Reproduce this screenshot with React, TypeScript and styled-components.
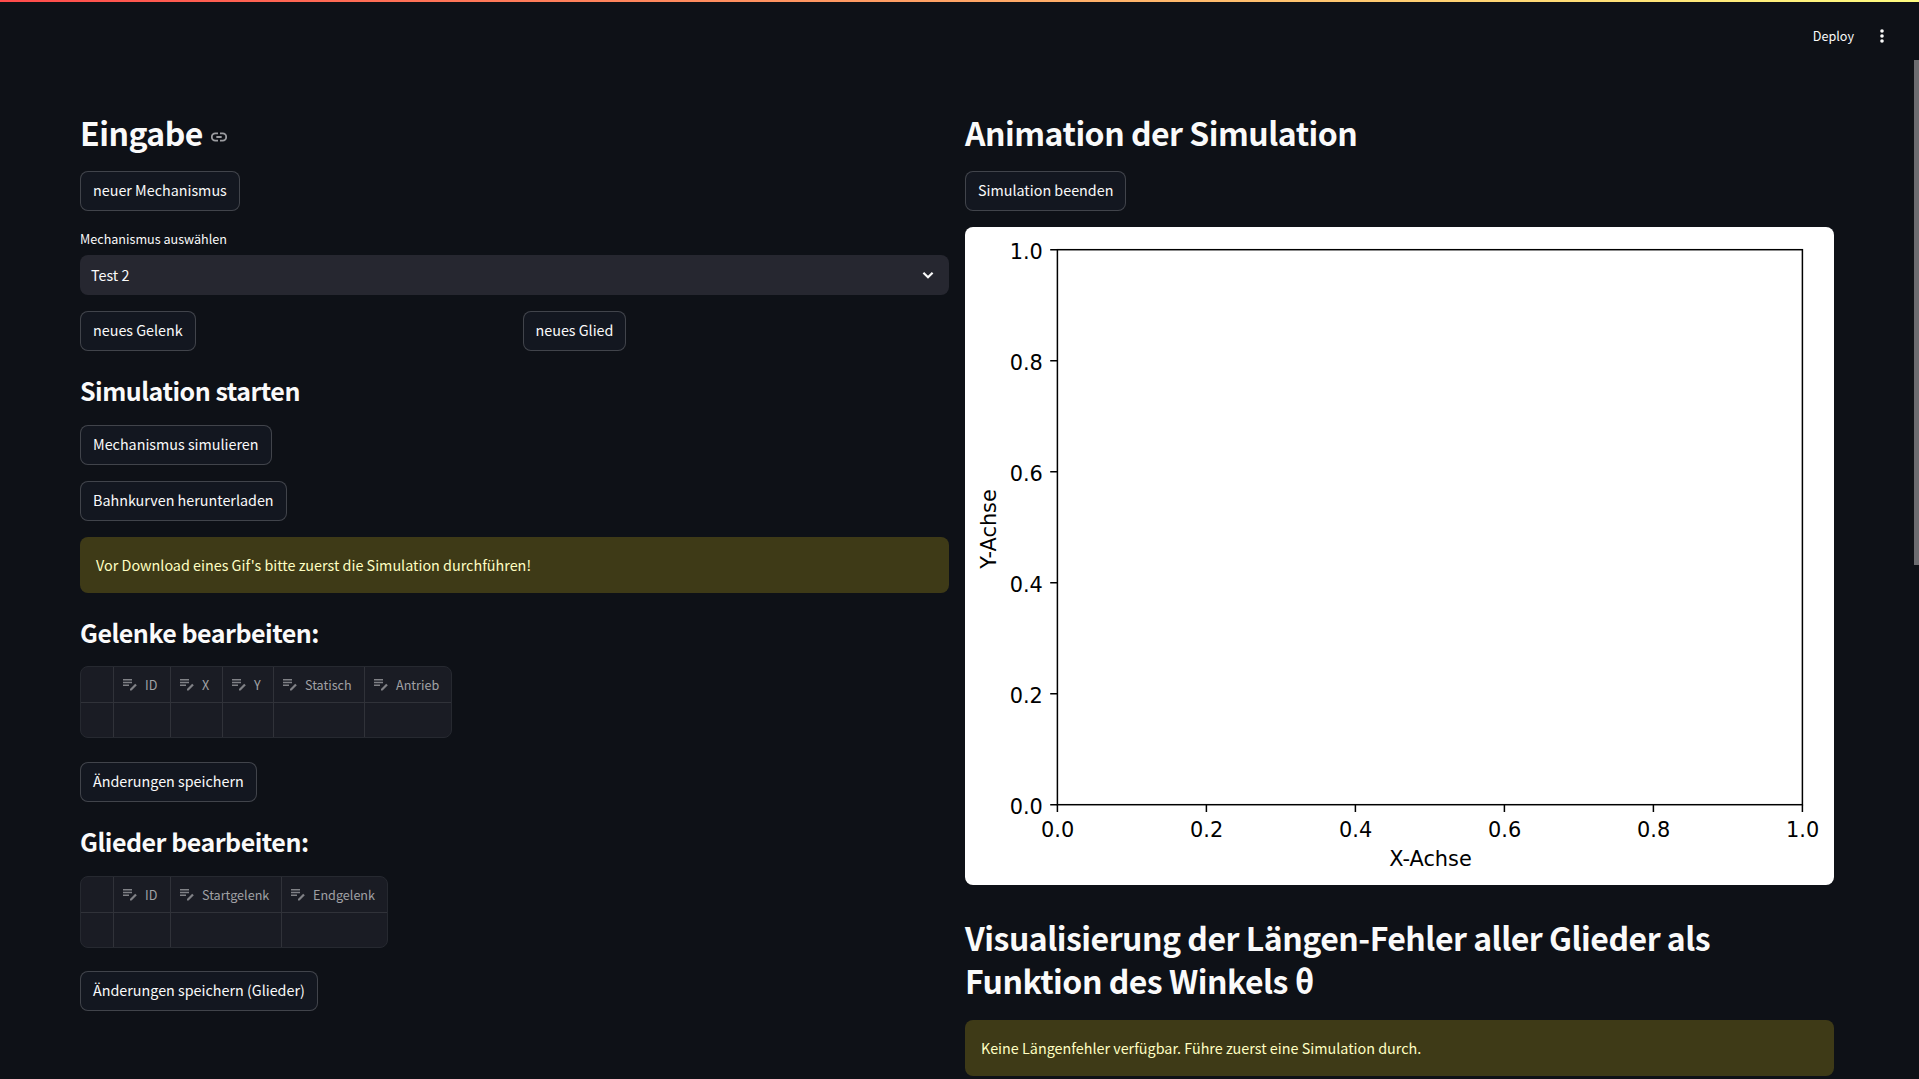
import React from "react";
import styled, { createGlobalStyle } from "styled-components";

const sans = `"Noto Sans CJK SC", "Noto Sans", sans-serif`;

const GlobalStyle = createGlobalStyle`
  * { box-sizing: border-box; }
  html, body { margin: 0; background: #0e1117; overflow: hidden; }
  body { font-family: ${sans}; color: #fafafa; }
`;

const Page = styled.div`
  height: 1079px;
  overflow: hidden;
  position: relative;
  background: #0e1117;
`;

const Decoration = styled.div`
  height: 2px;
  background: linear-gradient(90deg, #ff4b4b, #fffd80);
`;

const TopBar = styled.header`
  height: 58px;
  display: flex;
  justify-content: flex-end;
  align-items: center;
  padding: 10px 29px 0 0;
  gap: 20px;
`;

const Deploy = styled.span`
  font-size: 12.6px;
  line-height: 20px;
`;

const ScrollThumb = styled.div`
  position: absolute;
  right: 0;
  top: 60px;
  width: 5px;
  height: 505px;
  background: #6c6c70;
`;

const Main = styled.main`
  display: grid;
  grid-template-columns: 869px 869px;
  column-gap: 16px;
  padding: 36px 0 0 80px;
`;

const Column = styled.section`
  display: flex;
  flex-direction: column;
  align-items: flex-start;
  gap: 16px;
`;

const Title = styled.h2<{ $tall?: boolean }>`
  margin: 0;
  height: ${(p) => (p.$tall ? "103px" : "59px")};
  padding-top: 15px;
  font-size: 32px;
  font-weight: 700;
  line-height: 43px;
  letter-spacing: -0.5px;
  display: ${(p) => (p.$tall ? "block" : "flex")};
  gap: 8px;
`;

const TitleIcon = styled.svg`
  width: 16px;
  height: 16px;
  margin-top: 18px;
`;

const Subtitle = styled.h3<{ $h?: number }>`
  margin: 0;
  height: ${(p) => p.$h ?? 42}px;
  padding-top: 6px;
  font-size: 25px;
  font-weight: 700;
  line-height: 34px;
  letter-spacing: -0.5px;
`;

const Button = styled.button`
  height: 40px;
  padding: 0 12px 2px;
  border: 1px solid rgba(250, 250, 250, 0.2);
  border-radius: 8px;
  background: #131720;
  color: #fafafa;
  font-family: inherit;
  font-size: 14.34px;
  line-height: 24px;
  white-space: nowrap;
`;

const Field = styled.div`
  width: 100%;
`;

const Label = styled.div`
  height: 28px;
  font-size: 12.6px;
  line-height: 24px;
`;

const Select = styled.div`
  height: 40px;
  display: flex;
  align-items: center;
  justify-content: space-between;
  padding: 0 11px;
  border-radius: 8px;
  background: #262730;
  font-size: 14.34px;
`;

const SelectValue = styled.span`
  padding-bottom: 2px;
`;

const Split = styled.div`
  width: 100%;
  display: grid;
  grid-template-columns: 1fr 1fr;
  column-gap: 16px;
  justify-items: start;
`;

const Alert = styled.div`
  width: 100%;
  height: 56px;
  padding: 16px;
  border-radius: 8px;
  background: #3e3a17;
  color: #ffffc2;
  font-size: 14.36px;
  line-height: 24px;
`;

const Table = styled.div<{ $cols: string; $gapBelow: number }>`
  display: grid;
  grid-template-columns: ${(p) => p.$cols};
  grid-template-rows: 36px 34px;
  border: 1px solid #262930;
  border-radius: 8px;
  background: #1a1c24;
  overflow: hidden;
  margin-bottom: ${(p) => p.$gapBelow}px;
`;

const Cell = styled.div<{ $head?: boolean; $last?: boolean }>`
  display: flex;
  align-items: center;
  gap: 7px;
  padding-left: 8px;
  border-right: ${(p) => (p.$last ? "0" : "1px solid #303239")};
  border-bottom: ${(p) => (p.$head ? "1px solid #303239" : "0")};
  color: #a0a1a5;
  font-size: 12.6px;
  white-space: nowrap;
`;

const Figure = styled.svg`
  display: block;
  width: 869px;
  height: 658px;
  border-radius: 8px;
  background: #fff;
`;

const EditIcon = () => (
  <svg width="16" height="16" viewBox="0 0 16 16" fill="#808186">
    <path d="M1 2h9v1.5H1zM1 4.8h9v1.5H1zM1 7.6h6v1.5H1z" />
    <path d="M8 12 13.2 6.8 14.8 8.2 9.6 13.4H8z" />
  </svg>
);

interface EditTableProps {
  names: string[];
  cols: string;
  gapBelow: number;
}

function EditTable({ names, cols, gapBelow }: EditTableProps) {
  const last = names.length - 1;
  return (
    <Table $cols={cols} $gapBelow={gapBelow}>
      {names.map((n, i) => (
        <Cell key={"h" + i} $head $last={i === last}>
          {n && <EditIcon />}
          {n}
        </Cell>
      ))}
      {names.map((_, i) => (
        <Cell key={"b" + i} $last={i === last} />
      ))}
    </Table>
  );
}

const X0 = 92.4, X1 = 837.4, Y0 = 577.7, Y1 = 22.7;
const ticks = [0, 0.2, 0.4, 0.6, 0.8, 1];

function Plot() {
  return (
    <Figure viewBox="0 0 869 658" fontFamily="DejaVu Sans" fontSize="20.85">
      <rect x={X0} y={Y1} width={X1 - X0} height={Y0 - Y1} fill="none" stroke="#000" strokeWidth="1.5" />
      {ticks.map((t) => {
        const x = X0 + t * (X1 - X0);
        const y = Y0 - t * (Y0 - Y1);
        return (
          <g key={t}>
            <path d={`M${x} ${Y0}v7.2M${X0} ${y}h-7.2`} stroke="#000" strokeWidth="1.5" />
            <text x={x + 0.3} y={Y0 + 32} textAnchor="middle">{t.toFixed(1)}</text>
            <text x={X0 - 14.5} y={y + 9} textAnchor="end">{t.toFixed(1)}</text>
          </g>
        );
      })}
      <text x={(X0 + X1) / 2 + 0.6} y="638.7" textAnchor="middle">X-Achse</text>
      <text transform="translate(30.5 302) rotate(-90)" textAnchor="middle">Y-Achse</text>
    </Figure>
  );
}

const LinkIcon = () => (
  <TitleIcon viewBox="0 0 24 24" fill="none" stroke="#9b9ca0" strokeWidth="2.7">
    <path d="M10.5 6.5H6.5a5 5.2 0 0 0 0 11h4M13.5 6.5h4a5 5.2 0 0 1 0 11h-4M8 12h8" />
  </TitleIcon>
);

export default function App() {
  return (
    <Page>
      <GlobalStyle />
      <Decoration />
      <TopBar>
        <Deploy>Deploy</Deploy>
        <svg width="16" height="16" viewBox="0 0 16 16" fill="#fafafa">
          <circle cx="8" cy="3" r="1.8" />
          <circle cx="8" cy="8" r="1.8" />
          <circle cx="8" cy="13" r="1.8" />
        </svg>
      </TopBar>
      <ScrollThumb />
      <Main>
        <Column>
          <Title>Eingabe<LinkIcon /></Title>
          <Button>neuer Mechanismus</Button>
          <Field>
            <Label>Mechanismus auswählen</Label>
            <Select>
              <SelectValue>Test 2</SelectValue>
              <svg width="20" height="20" viewBox="0 0 20 20" fill="none" stroke="#fafafa" strokeWidth="2.2">
                <path d="m5.4 7.8 4.6 4.4 4.6-4.4" />
              </svg>
            </Select>
          </Field>
          <Split>
            <Button>neues Gelenk</Button>
            <Button>neues Glied</Button>
          </Split>
          <Subtitle>Simulation starten</Subtitle>
          <Button>Mechanismus simulieren</Button>
          <Button>Bahnkurven herunterladen</Button>
          <Alert>Vor Download eines Gif's bitte zuerst die Simulation durchführen!</Alert>
          <Subtitle $h={41}>Gelenke bearbeiten:</Subtitle>
          <EditTable
            names={["", "ID", "X", "Y", "Statisch", "Antrieb"]}
            cols="33px 57px 52px 51px 91px 86px"
            gapBelow={8}
          />
          <Button>Änderungen speichern</Button>
          <Subtitle>Glieder bearbeiten:</Subtitle>
          <EditTable
            names={["", "ID", "Startgelenk", "Endgelenk"]}
            cols="33px 57px 111px 105px"
            gapBelow={7}
          />
          <Button>Änderungen speichern (Glieder)</Button>
        </Column>
        <Column>
          <Title>Animation der Simulation</Title>
          <Button>Simulation beenden</Button>
          <Plot />
          <Title $tall>Visualisierung der Längen-Fehler aller Glieder als Funktion des Winkels θ</Title>
          <Alert>Keine Längenfehler verfügbar. Führe zuerst eine Simulation durch.</Alert>
        </Column>
      </Main>
    </Page>
  );
}
